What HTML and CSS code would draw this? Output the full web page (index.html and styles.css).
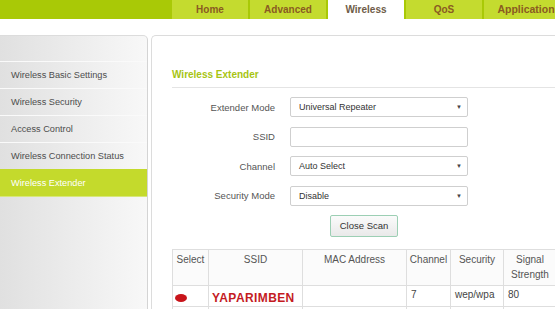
FILE: index.html
```html
<!DOCTYPE html>
<html lang="en">
<head>
    <meta charset="UTF-8">
    <meta name="viewport" content="width=device-width, initial-scale=1.0">
    <title>Wireless Extender</title>
    <link rel="stylesheet" href="styles.css">
</head>
<body>
    <div class="topbar">
        <ul class="tabs">
            <li>Home</li>
            <li>Advanced</li>
            <li class="active">Wireless</li>
            <li>QoS</li>
            <li>Application</li>
        </ul>
    </div>

    <div class="main">
        <aside class="sidebar">
            <ul class="menu">
                <li>Wireless Basic Settings</li>
                <li>Wireless Security</li>
                <li>Access Control</li>
                <li>Wireless Connection Status</li>
                <li class="active">Wireless Extender</li>
            </ul>
        </aside>

        <section class="panel">
            <h3 class="panel-title">Wireless Extender</h3>

            <div class="form">
                <label>Extender Mode</label>
                <div class="select"><span>Universal Repeater</span><span class="arrow">&#9660;</span></div>

                <label>SSID</label>
                <div class="text-input"></div>

                <label>Channel</label>
                <div class="select"><span>Auto Select</span><span class="arrow">&#9660;</span></div>

                <label>Security Mode</label>
                <div class="select"><span>Disable</span><span class="arrow">&#9660;</span></div>
            </div>

            <div class="actions">
                <button class="btn">Close Scan</button>
            </div>

            <table class="scan-table">
                <colgroup>
                    <col style="width: 36px">
                    <col style="width: 94px">
                    <col style="width: 104px">
                    <col style="width: 44px">
                    <col style="width: 53px">
                    <col style="width: 53px">
                </colgroup>
                <thead>
                    <tr>
                        <th>Select</th>
                        <th>SSID</th>
                        <th>MAC Address</th>
                        <th>Channel</th>
                        <th>Security</th>
                        <th>Signal Strength</th>
                    </tr>
                </thead>
                <tbody>
                    <tr>
                        <td><span class="dot"></span></td>
                        <td><span class="ssid">YAPARIMBEN</span></td>
                        <td></td>
                        <td>7</td>
                        <td>wep/wpa</td>
                        <td>80</td>
                    </tr>
                    <tr>
                        <td></td><td></td><td></td><td></td><td></td><td></td>
                    </tr>
                </tbody>
            </table>
        </section>
    </div>
</body>
</html>
```

FILE: styles.css
```css
body {
    margin: 0;
    font-family: "Liberation Sans", Arial, sans-serif;
    background-color: #fff;
    width: 555px;
    height: 309px;
    overflow: hidden;
}
.topbar {
    height: 19px;
    background-color: #a9c906;
    padding-left: 172px;
    overflow: hidden;
}
.tabs {
    list-style: none;
    margin: 0;
    padding: 0;
    display: flex;
    gap: 2px;
}
.tabs li {
    flex: 0 0 76px;
    height: 19px;
    line-height: 19px;
    text-align: center;
    background-color: #c4db2f;
    color: #8a5b22;
    font-size: 10px;
    font-weight: bold;
    white-space: nowrap;
}
.tabs li.active {
    background-color: #fff;
    color: #6e5c48;
}
.tabs li:last-child {
    flex-basis: 84px;
    font-size: 10.5px;
}
.main {
    display: flex;
    gap: 3px;
    margin-top: 16px;
    height: 274px;
}
.sidebar {
    flex: 0 0 148px;
    box-sizing: border-box;
    background: linear-gradient(to right, #e0e0e0, #f8f8f8);
    border-top: 1px solid #dcdcdc;
    border-right: 1px solid #d4d4d4;
    border-top-right-radius: 5px;
    padding-top: 25px;
}
.menu {
    list-style: none;
    margin: 0;
    padding: 0;
}
.menu li {
    height: 26px;
    line-height: 26px;
    border-top: 1px solid #fafafa;
    padding-left: 11px;
    font-size: 9.2px;
    color: #4d4d4d;
}
.menu li.active {
    background-color: #c4da2c;
    border-top-color: #c4da2c;
    border-bottom: 1px solid #d7e77a;
    color: #fff;
}
.panel {
    flex: 1;
    min-width: 0;
    overflow: hidden;
    border: 1px solid #dcdcdc;
    border-right: none;
    border-bottom: none;
    border-radius: 5px 0 0 0;
    padding: 0 0 0 20px;
}
.panel-title {
    width: 384px;
    margin: 0;
    padding: 32px 0 5px;
    line-height: 14px;
    font-size: 10px;
    font-weight: bold;
    color: #a7c412;
    border-bottom: 1px solid #e4e4e4;
}
.form {
    display: grid;
    grid-template-columns: 103px 178px;
    column-gap: 15px;
    row-gap: 9.5px;
    align-items: center;
    margin-top: 9px;
}
.form label {
    text-align: right;
    font-size: 9.5px;
    color: #555;
}
.select,
.text-input {
    box-sizing: border-box;
    height: 20px;
    border: 1px solid #cfcfcf;
    border-radius: 2px;
    background-color: #fff;
}
.select {
    display: flex;
    justify-content: space-between;
    align-items: center;
    padding: 0 5px 0 8px;
    font-size: 9px;
    color: #333;
}
.select .arrow {
    font-size: 6px;
    color: #444;
}
.actions {
    width: 384px;
    text-align: center;
    margin-top: 9px;
}
.btn {
    width: 68px;
    height: 22px;
    padding: 0;
    font-family: "Liberation Sans", Arial, sans-serif;
    font-size: 9.5px;
    color: #333;
    background: linear-gradient(#fbfbfb, #e9e9e9);
    border: 1px solid #9ccfb4;
    border-radius: 2px;
}
.scan-table {
    margin-top: 12px;
    width: 384px;
    table-layout: fixed;
    border-collapse: collapse;
    font-size: 10px;
    color: #444;
}
.scan-table th,
.scan-table td {
    border: 1px solid #dedede;
    vertical-align: top;
}
.scan-table th {
    height: 36px;
    box-sizing: border-box;
    padding: 2px 2px 0;
    line-height: 15px;
    font-weight: normal;
    text-align: center;
    background-color: #fbfbfb;
    color: #555;
}
.scan-table td {
    height: 21px;
    box-sizing: border-box;
    padding: 2px 3px 0 4px;
    line-height: 14px;
    text-align: left;
}
.dot {
    display: block;
    width: 12px;
    height: 8px;
    margin: 6px 0 0 -2px;
    border-radius: 50%;
    background-color: #c8141a;
}
.ssid {
    display: block;
    margin: 3px 0 0 -1px;
    font-size: 12px;
    font-weight: bold;
    letter-spacing: 0.4px;
    color: #c41b1f;
}
```
